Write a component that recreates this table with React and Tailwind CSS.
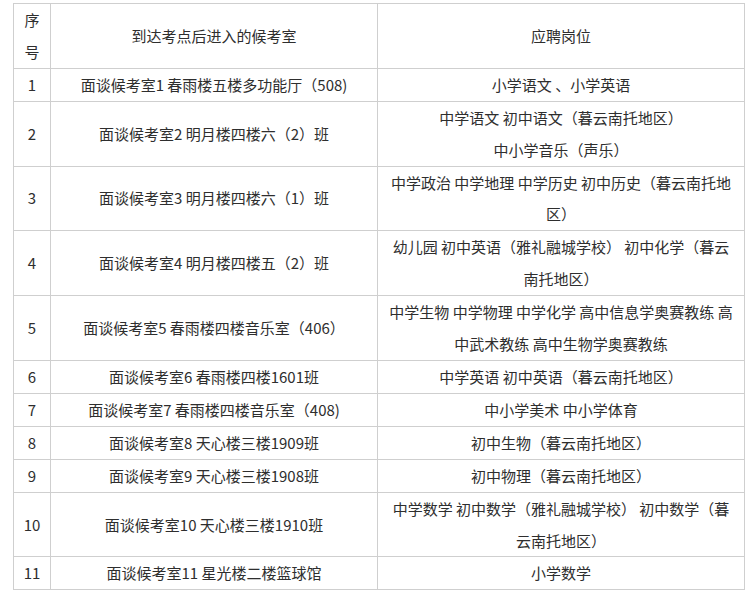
import React from 'react';

const rows = [
    { no: '1', room: '面谈候考室1 春雨楼五楼多功能厅（508)', post: '小学语文 、小学英语' },
    { no: '2', room: '面谈候考室2 明月楼四楼六（2）班', post: ['中学语文 初中语文（暮云南托地区）', '中小学音乐（声乐）'] },
    { no: '3', room: '面谈候考室3 明月楼四楼六（1）班', post: '中学政治 中学地理 中学历史 初中历史（暮云南托地区）' },
    { no: '4', room: '面谈候考室4 明月楼四楼五（2）班', post: '幼儿园 初中英语（雅礼融城学校） 初中化学（暮云南托地区）' },
    { no: '5', room: '面谈候考室5 春雨楼四楼音乐室（406）', post: '中学生物 中学物理 中学化学 高中信息学奥赛教练 高中武术教练 高中生物学奥赛教练' },
    { no: '6', room: '面谈候考室6 春雨楼四楼1601班', post: '中学英语 初中英语（暮云南托地区）' },
    { no: '7', room: '面谈候考室7 春雨楼四楼音乐室（408)', post: '中小学美术 中小学体育' },
    { no: '8', room: '面谈候考室8 天心楼三楼1909班', post: '初中生物（暮云南托地区）' },
    { no: '9', room: '面谈候考室9 天心楼三楼1908班', post: '初中物理（暮云南托地区）' },
    { no: '10', room: '面谈候考室10 天心楼三楼1910班', post: '中学数学 初中数学（雅礼融城学校） 初中数学（暮云南托地区）' },
    { no: '11', room: '面谈候考室11 星光楼二楼篮球馆', post: '小学数学' },
];

const cell = 'border border-[#cfcfcf] text-center align-middle leading-[31.9px] p-0';

const App = () => {
    return (
        <div className="bg-white w-[747px] h-[595px] pt-[3px] pl-[13px] text-[#2e2e2e] text-[15px] font-['Noto_Sans_CJK_SC','Noto_Sans',sans-serif]">
            <table className="border-collapse table-fixed w-[731px]">
                <colgroup>
                    <col className="w-[37px]" />
                    <col className="w-[327px]" />
                    <col className="w-[367px]" />
                </colgroup>
                <thead>
                    <tr>
                        <th className={`${cell} font-normal`}>序<br />号</th>
                        <th className={`${cell} font-normal`}>到达考点后进入的候考室</th>
                        <th className={`${cell} font-normal`}>应聘岗位</th>
                    </tr>
                </thead>
                <tbody>
                    {rows.map((row) => (
                        <tr key={row.no}>
                            <td className={cell}>{row.no}</td>
                            <td className={`${cell} px-[6px]`}>{row.room}</td>
                            <td className={`${cell} px-[9px]`}>
                                {Array.isArray(row.post)
                                    ? row.post.map((line) => <div key={line}>{line}</div>)
                                    : row.post}
                            </td>
                        </tr>
                    ))}
                </tbody>
            </table>
        </div>
    );
};

export default App;
